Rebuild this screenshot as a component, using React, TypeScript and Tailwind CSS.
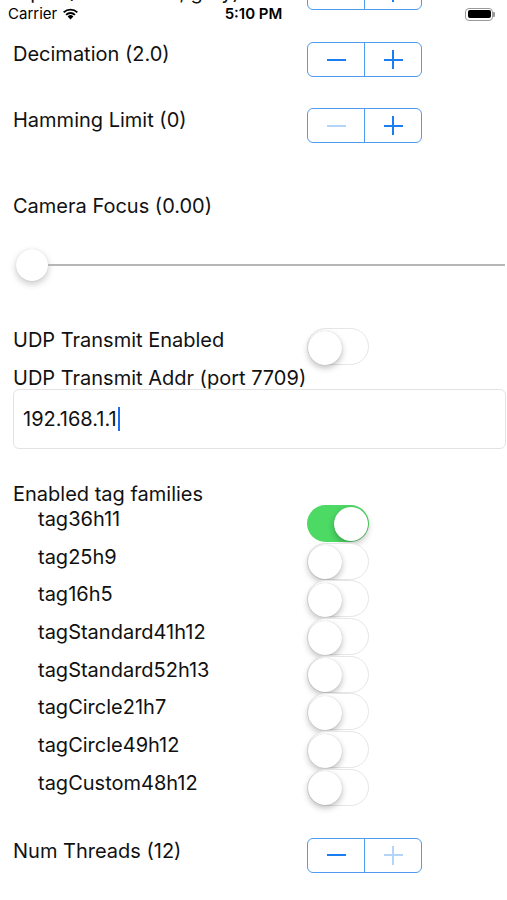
import React from 'react'

const font = { fontFamily: 'Inter, "Liberation Sans", sans-serif' }

function Stepper({ minusOff = false, plusOff = false }: { minusOff?: boolean; plusOff?: boolean }) {
  const on = 'bg-[#1a7ef2]'
  const off = 'bg-[#b5d5f8]'
  return (
    <div className="flex w-[115px] h-[35px] rounded-[6px] border border-[#4f9bf0] shrink-0">
      <div className="flex-1 flex items-center justify-center border-r border-[#4f9bf0]">
        <div className={`w-[19px] h-[2px] ${minusOff ? off : on}`} />
      </div>
      <div className="flex-1 flex items-center justify-center relative">
        <div className={`w-[19px] h-[2px] ${plusOff ? off : on}`} />
        <div className={`absolute w-[2px] h-[19px] ${plusOff ? off : on}`} />
      </div>
    </div>
  )
}

function Toggle({ on = false }: { on?: boolean }) {
  return (
    <div className={`relative w-[62px] h-[37px] rounded-full shrink-0 ${on ? 'bg-[#4cd964]' : 'bg-white border-[1.5px] border-[#e6e6e6]'}`}>
      <div className={`absolute top-[1.5px] w-[34px] h-[34px] rounded-full bg-white shadow-[0_3px_6px_rgba(0,0,0,0.25),0_0_1px_rgba(0,0,0,0.2)] ${on ? 'right-[1.5px]' : 'left-0 -top-[0.5px]'}`} />
    </div>
  )
}

const tags = [
  ['tag36h11', true],
  ['tag25h9', false],
  ['tag16h5', false],
  ['tagStandard41h12', false],
  ['tagStandard52h13', false],
  ['tagCircle21h7', false],
  ['tagCircle49h12', false],
  ['tagCustom48h12', false],
] as const

export default function App() {
  return (
    <div className="relative w-[507px] h-[900px] overflow-hidden bg-white text-[#111] text-[20px] leading-[24px]" style={font}>
      {/* status bar */}
      <div className="absolute top-0 left-0 right-0 h-[28px] flex items-center px-[8px] z-10">
        <div className="flex items-center gap-[5px] text-[15px] leading-[18px] text-black">
          <span>Carrier</span>
          <svg width="17" height="12" viewBox="0 0 17 12">
            <path d="M8.5 11.5 L5.6 8.4 A4.2 4.2 0 0 1 11.4 8.4 Z" fill="#000" />
            <path d="M3.4 6.2 A7.3 7.3 0 0 1 13.6 6.2 L12.3 7.5 A5.5 5.5 0 0 0 4.7 7.5 Z" fill="#000" />
            <path d="M1 3.8 A10.8 10.8 0 0 1 16 3.8 L14.7 5.1 A9 9 0 0 0 2.3 5.1 Z" fill="#000" />
          </svg>
        </div>
        <div className="absolute left-0 right-0 text-center text-[15px] leading-[18px] font-semibold text-black">5:10 PM</div>
        <div className="ml-auto flex items-center mr-[4px]">
          <div className="w-[28px] h-[13px] rounded-[4px] border border-[#999] p-[1.5px]">
            <div className="w-full h-full rounded-[2px] bg-black" />
          </div>
          <div className="w-[2px] h-[5px] rounded-r-[1px] bg-[#999]" />
        </div>
      </div>

      <div className="flex flex-col">
        {/* row scrolled mostly out of view */}
        <div className="flex items-end h-[34px] -mt-[24px] pl-[13px]">
          <div className="w-[294px] mb-[6px]">Input (1280 x 720, gray)</div>
          <Stepper />
        </div>

        <div className="flex items-start mt-[32px] pl-[13px]">
          <div className="w-[294px]">Decimation (2.0)</div>
          <Stepper />
        </div>

        <div className="flex items-start mt-[31px] pl-[13px]">
          <div className="w-[294px]">Hamming Limit (0)</div>
          <Stepper minusOff />
        </div>

        <div className="mt-[51px] pl-[13px]">Camera Focus (0.00)</div>

        <div className="flex items-center h-[32px] mt-[31px] pl-[16px] pr-[2px]">
          <div className="w-[32px] h-[32px] rounded-full bg-white shadow-[0_3px_7px_rgba(0,0,0,0.22),0_0_1px_rgba(0,0,0,0.15)] shrink-0" />
          <div className="flex-1 h-[2px] bg-[#b6b6b6]" />
        </div>

        <div className="flex items-start h-[38px] mt-[47px] pl-[13px]">
          <div className="w-[294px]">UDP Transmit Enabled</div>
          <Toggle />
        </div>

        <div className="pl-[13px] h-[23px]">UDP Transmit Addr (port 7709)</div>

        <div className="ml-[13px] mr-[1px] h-[60px] rounded-[6px] border border-[#e3e3e3] flex items-center pl-[9px]">
          <span>192.168.1.1</span>
          <span className="w-[2px] h-[24px] bg-[#1a6cf0] ml-[1px]" />
        </div>

        <div className="mt-[33px] pl-[13px]">Enabled tag families</div>

        <div className="flex flex-col mt-[1px]">
          {tags.map(([name, on]) => (
            <div key={name} className="flex items-start h-[37.7px] pl-[38px]">
              <div className="w-[269px]">{name}</div>
              <div className="-mt-[2px]">
                <Toggle on={on} />
              </div>
            </div>
          ))}
        </div>

        <div className="flex items-start mt-[29px] pl-[13px]">
          <div className="w-[294px] mt-[1px]">Num Threads (12)</div>
          <Stepper plusOff />
        </div>
      </div>
    </div>
  )
}
